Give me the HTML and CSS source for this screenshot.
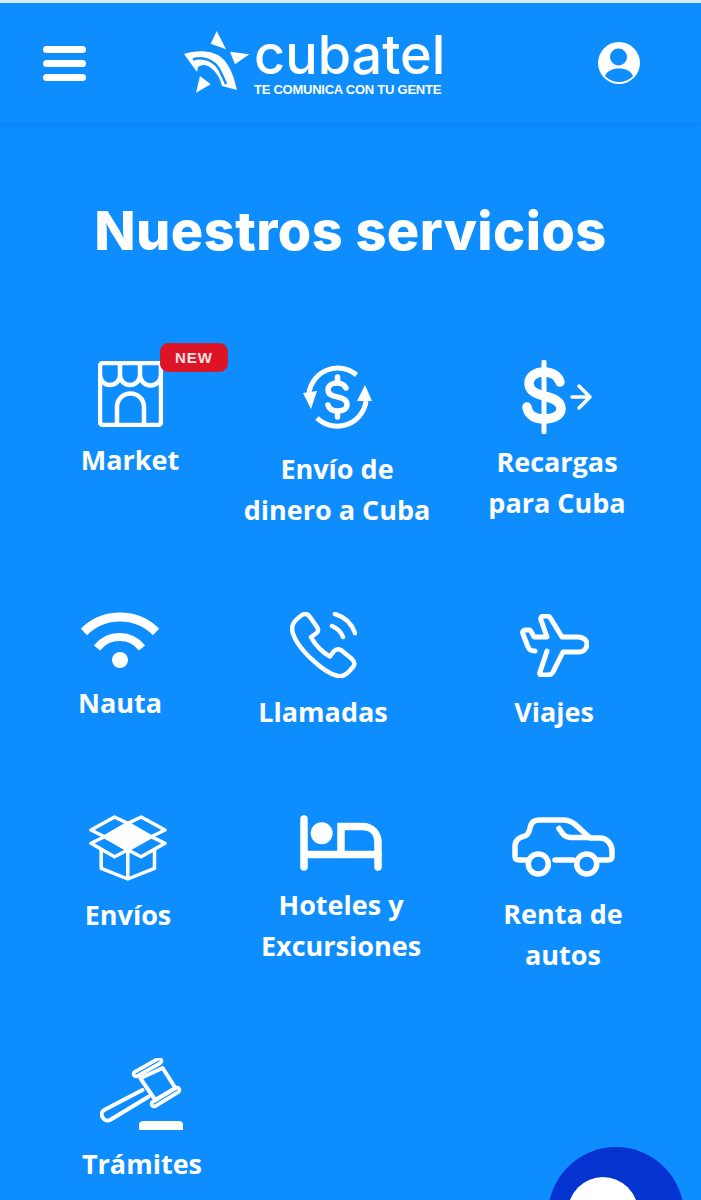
FILE: index.html
```html
<!DOCTYPE html>
<html lang="es">
<head>
<meta charset="utf-8">
<title>Cubatel</title>
<link rel="stylesheet" href="styles.css">
</head>
<body>
<header class="header">
  <div class="burger"><span></span><span></span><span></span></div>
  <a class="logo">
    <svg class="logo-star" viewBox="0 0 66 66"><g fill="#fff"><path d="M32.700 0 26.700 12.700 42 18.300Z"/><path d="M65.300 23.300 46 20.700 51 33.300Z"/><path d="M12 61.700 16 45 26.700 53.300Z"/><path d="M0 23C13 19 28 19 38 27 46 34 50 46 53 59L38 55C36 46 31 39 24 35 20 33 17 34 14 36L13 41Z"/></g><path d="M9 28.500C20 25 30 30 35 38 38 44 40 48 42 53" fill="none" stroke="#0e8dff" stroke-width="2.500"/></svg>
    <div class="logo-text">
      <div class="logo-name">cubatel</div>
      <div class="logo-tag">TE COMUNICA CON TU GENTE</div>
    </div>
  </a>
  <svg class="user" viewBox="0 0 42 42"><circle cx="21" cy="21" r="21" fill="#fff"/><circle cx="20.500" cy="15" r="8.500" fill="#0e8dff"/><path d="M7 34C9 29 14 26.500 21 26.500S33 29 35 34C31 38 26 40 21 40S11 38 7 34Z" fill="#0e8dff"/></svg>
</header>
<main class="main">
  <h1 class="title">Nuestros servicios</h1>
  <div class="rows">
    <div class="row row-1">
      <div class="item market">
        <svg class="ic" width="65" height="66" viewBox="0 0 65 66"><g fill="none" stroke="#fff" stroke-width="4.500" stroke-linejoin="round"><rect x="2" y="2" width="61" height="62" rx="3"/><path d="M2 14A10 10 0 0 0 22 14 10 10 0 0 0 42 14 10 10 0 0 0 63 14M22 2V14M42 2V14"/><path d="M19 64V46A13.500 13.500 0 0 1 46 46V64"/></g></svg>
        <span class="badge">NEW</span>
        <div class="label">Market</div>
      </div>
      <div class="item envio">
        <svg class="ic" width="69" height="65" viewBox="0 0 69 65"><g fill="none" stroke="#fff"><path d="M6 28A29 29 0 0 1 53.500 10" stroke-width="5"/><path d="M63 36A29 29 0 0 1 14 53" stroke-width="5"/><path d="M43 23C41 19 37 18 34 18 28 18 25 21 25 25 25 30 30 31 34.500 32 40 33 44 35 44 39.500 44 44 40 46 35 46 30 46 26 44 25 40M34.500 12V18M34.500 46V52" stroke-width="5.500" stroke-linecap="round"/></g><path d="M0 28 14 26 8 44ZM62 20 69 36 54 36Z" fill="#fff"/></svg>
        <div class="label">Envío de<br>dinero a Cuba</div>
      </div>
      <div class="item recargas">
        <svg class="ic" width="74" height="74" viewBox="0 0 74 74"><g fill="none" stroke="#fff" stroke-linecap="round" stroke-linejoin="round"><path d="M40 22C38 15 31 12 24 12 15 12 9 17 9 23.500 9 31 16 34 24 36 33 38 41 41 41 49 41 55 34 59 24 59 15 59 8 55 7 47" stroke-width="9.500"/><path d="M24 2V72" stroke-width="5"/><path d="M52 37H70M59 26 70 37 59 48" stroke-width="3.500"/></g></svg>
        <div class="label">Recargas<br>para Cuba</div>
      </div>
    </div>
    <div class="row row-2">
      <div class="item nauta">
        <svg class="ic" width="80" height="56" viewBox="0 0 80 56"><g fill="none" stroke="#fff"><path d="M4 20A51 51 0 0 1 76 20" stroke-width="9"/><path d="M17 36A28.500 28.500 0 0 1 62 36" stroke-width="8"/></g><circle cx="40" cy="48" r="8" fill="#fff"/></svg>
        <div class="label">Nauta</div>
      </div>
      <div class="item llamadas">
        <svg class="ic" width="67" height="66" viewBox="0 0 67 66"><g fill="none" stroke="#fff" stroke-width="4.500" stroke-linecap="round" stroke-linejoin="round"><path d="M12 3C15 1 18 2 20 5L27 15C29 18 28 20 26 21.500L21 25C25 33 33 41 40 44.500L44 39C46 37 49 37 51 38L62 47C65 50 65 53 63 55 58 61 54 65 48 64 34 61 4 35 2 17 2 11 6 7 12 3Z"/><path d="M42 14C47 16 51 20 53 25M45 2C55 5 62 12 65 21"/></g></svg>
        <div class="label">Llamadas</div>
      </div>
      <div class="item viajes">
        <svg class="ic" width="69" height="63" viewBox="0 0 69 63"><g fill="none" stroke="#fff" stroke-width="5" stroke-linecap="round" stroke-linejoin="round"><path d="M27 37 20 58C19 60 20 61 22 61H28C30 61 32 60 33 58L43 38H58C64 38 67 34 67 30 67 27 64 23 58 23H42L31 5C30 3 29 2 27 2H25C22 2 20 3 21 6L27 23H14L12 19C11 17 10 16 9 16H5C3 16 2 18 3 20L8 33C9 36 12 37 15 37"/></g></svg>
        <div class="label">Viajes</div>
      </div>
    </div>
    <div class="row row-3">
      <div class="item envios">
        <svg class="ic" width="78" height="66" viewBox="-0.500 0 78 66"><path d="M15 21.700 38.300 8.300 61.700 21.700 38.300 35Z" fill="#fff"/><g fill="none" stroke="#fff" stroke-width="3.500" stroke-linejoin="round"><path d="M1.500 15 25 2 38.300 8.300 15 21.700Z"/><path d="M75.500 15 51.700 2 38.300 8.300 61.700 21.700Z"/><path d="M1.500 28.300 15 21.700 38.300 35 25 41.700Z"/><path d="M75.500 28.300 61.700 21.700 38.300 35 51.700 41.700Z"/><path d="M11.700 34.300V53.300L38.300 64 65 53.300V34.300M38.300 35V64"/></g></svg>
        <div class="label">Envíos</div>
      </div>
      <div class="item hoteles">
        <svg class="ic" width="82" height="56" viewBox="0 0 82 56"><g fill="none" stroke="#fff" stroke-width="7.500" stroke-linecap="round"><path d="M4 4V52M4 39.500H78"/><path d="M41 37V11.500H62C72 11.500 78 18 78 28V52"/></g><circle cx="21.700" cy="18.300" r="11" fill="#fff"/></svg>
        <div class="label">Hoteles y<br>Excursiones</div>
      </div>
      <div class="item renta">
        <svg class="ic" width="103" height="62" viewBox="0 0 103 62"><g fill="none" stroke="#fff" stroke-width="5.500" stroke-linecap="round" stroke-linejoin="round"><path d="M16 44H7C4 44 3 43 3 40V30C3 24 8 21 13 20 16 19 17 17 18 12 19 6 22 4 27 4H52C58 4 62 7 66 11L78 22H88C95 22 100 28 100 35V40C100 43 99 44 96 44H86"/><path d="M43 44H61"/><path d="M47 12.500C50 17 52 21 58 21.500H78"/><circle cx="26.300" cy="48" r="10"/><circle cx="74.700" cy="48" r="10"/></g></svg>
        <div class="label">Renta de<br>autos</div>
      </div>
    </div>
    <div class="row row-4">
      <div class="item tramites">
        <svg class="ic" width="84" height="72" viewBox="0 0 84 72"><g fill="none" stroke-linecap="round" stroke-linejoin="round"><path d="M36 16 59 3M54 46 77 32" stroke="#fff" stroke-width="8.500"/><path d="M36 16 59 3M54 46 77 32" stroke="#0e8dff" stroke-width="1.200"/><path d="M40.400 20.300 62.600 10 75.400 30 55.300 42Z" stroke="#fff" stroke-width="4"/><path d="M42.400 32 4.200 52C1 54 1 57 3 60 5 63 8 63 10 62L48.500 38.700" stroke="#fff" stroke-width="4"/></g><path d="M39 72V67C39 64 41 63 44 63H78C81 63 83 64 83 67V72Z" fill="#fff"/></svg>
        <div class="label">Trámites</div>
      </div>
    </div>
  </div>
</main>
<div class="chat"><div class="chat-disc"><span class="chat-dot"></span></div></div>
</body>
</html>
```
FILE: styles.css
```css
* { box-sizing: border-box; }
html { margin: 0; padding: 0; height: 1200px; overflow: hidden; }
body {
  margin: 0;
  padding: 0;
  height: 1200px;
  overflow: hidden;
  position: relative;
  background: #0e8dff;
  color: #fff;
  font-family: "Open Sans", sans-serif;
  border-top: 3px solid #d3e9f7;
}
.header {
  height: 120px;
  display: flex;
  align-items: center;
  padding: 0 61px 0 43px;
  box-shadow: 0 1px 4px rgba(0, 80, 180, .18);
}
.burger { display: flex; flex-direction: column; gap: 7px; width: 43px; }
.burger span { height: 7px; border-radius: 4px; background: #fff; }
.logo { display: flex; align-items: flex-start; margin-left: 98px; color: #fff; }
.logo-star { width: 66px; height: 66px; margin-top: 1px; margin-right: 4px; }
.logo-text { display: flex; flex-direction: column; }
.logo-name { font-family: Inter, sans-serif; font-weight: 500; font-size: 54px; line-height: 50px; letter-spacing: 0; }
.logo-tag { font-family: "Liberation Sans", sans-serif; font-weight: 700; font-size: 13px; line-height: 13px; letter-spacing: -.25px; margin-top: 3px; white-space: nowrap; }
.user { width: 42px; height: 42px; margin-left: auto; }
.main { display: flex; flex-direction: column; }
.title { margin: 73px 0 0; text-align: center; font-family: Inter, sans-serif; font-weight: 800; font-size: 54px; letter-spacing: .45px; line-height: 70px; }
.rows { margin-top: 94px; }
.row { display: flex; align-items: flex-start; }
.row-1 { height: 252px; }
.row-2 { height: 203px; }
.row-3 { height: 243px; }
.item { position: relative; width: 200px; display: flex; flex-direction: column; align-items: center; gap: 13px; }
.ic { display: block; flex: none; }
.label { font-size: 27px; font-weight: 700; line-height: 41px; text-align: center; white-space: nowrap; }
.badge {
  position: absolute;
  left: 130px;
  top: -18px;
  width: 68px;
  height: 29px;
  border: 1px solid #c9213a;
  border-radius: 8px;
  background: #dc1426;
  color: #fbe3e6;
  font-family: "Liberation Sans", sans-serif;
  font-weight: 700;
  font-size: 15px;
  letter-spacing: 1px;
  line-height: 27px;
  text-align: center;
}
.market { margin-left: 30px; margin-top: 1px; gap: 12px; }
.envio { margin-left: 7px; margin-top: 5px; gap: 18px; }
.recargas { margin-left: 20px; gap: 7px; }
.nauta { margin-left: 20px; gap: 14px; }
.llamadas { margin-left: 3px; gap: 13px; }
.viajes { margin-left: 31px; margin-top: 2px; gap: 14px; }
.envios { margin-left: 28px; }
.hoteles { margin-left: 13px; gap: 13px; }
.renta { margin-left: 22px; margin-top: 1px; gap: 15px; }
.tramites { margin-left: 42px; gap: 13px; }
.chat {
  position: absolute;
  left: 548px;
  top: 1144px;
  width: 136px;
  height: 53px;
  overflow: hidden;
}
.chat-disc {
  position: relative;
  width: 136px;
  height: 136px;
  border-radius: 50%;
  background: #0433d0;
}
.chat-dot {
  position: absolute;
  left: 20px;
  top: 30px;
  width: 70px;
  height: 70px;
  border-radius: 50%;
  background: #fff;
}
```
